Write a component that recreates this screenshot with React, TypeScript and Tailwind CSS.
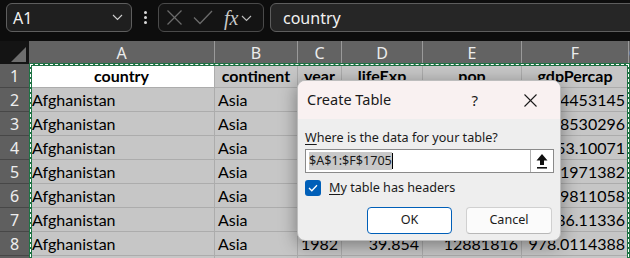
import React from "react";

const cellFont = { fontFamily: "Lato, 'Open Sans', sans-serif" };
const uiFont = { fontFamily: "'Noto Sans', 'Open Sans', sans-serif" };

type Cell = { t: string; align?: "l" | "c" | "r"; bold?: boolean; white?: boolean };

const rows: Cell[][] = [
  [
    { t: "country", align: "c", bold: true, white: true },
    { t: "continent", align: "c", bold: true },
    { t: "year", align: "c", bold: true },
    { t: "lifeExp", align: "c", bold: true },
    { t: "pop", align: "c", bold: true },
    { t: "gdpPercap", align: "c", bold: true },
  ],
  ...[
    ["1952", "28.801", "8425333", "779.4453145"],
    ["1957", "30.332", "9240934", "820.8530296"],
    ["1962", "31.997", "10267083", "853.10071"],
    ["1967", "34.02", "11537966", "836.1971382"],
    ["1972", "36.088", "13079460", "739.9811058"],
    ["1977", "38.438", "14880372", "786.11336"],
    ["1982", "39.854", "12881816", "978.0114388"],
    ["1987", "40.822", "13867957", "852.3959448"],
  ].map((r) => [
    { t: "Afghanistan", align: "l" as const },
    { t: "Asia", align: "l" as const },
    ...r.map((v) => ({ t: v, align: "r" as const })),
  ]),
];

const colLetters = ["A", "B", "C", "D", "E", "F", "G"];

function Chevron({ color = "#cfcfcf" }: { color?: string }) {
  return (
    <svg width="11" height="7" viewBox="0 0 11 7">
      <polyline points="1,1 5.5,5.5 10,1" fill="none" stroke={color} strokeWidth="1.1" />
    </svg>
  );
}

export default function App() {
  return (
    <div className="relative w-[630px] h-[258px] overflow-hidden bg-[#0d0d0d]">
      {/* top bar */}
      <div className="flex h-[41px] items-start pt-[3px] pl-[6px]">
        <div
          className="flex h-[29px] w-[126px] shrink-0 items-center justify-between rounded-[6px] border border-[#5e5e5e] bg-[#1f1f1f] pl-[6px] pr-[8px] text-[16px] text-[#f2f2f2]"
          style={uiFont}
        >
          <span>A1</span>
          <Chevron />
        </div>
        <div className="flex h-[29px] w-[26px] shrink-0 flex-col items-center justify-center gap-[2px]">
          <div className="h-[3px] w-[3px] rounded-full bg-[#d8d8d8]" />
          <div className="h-[3px] w-[3px] rounded-full bg-[#d8d8d8]" />
          <div className="h-[3px] w-[3px] rounded-full bg-[#d8d8d8]" />
        </div>
        <div className="flex h-[29px] w-[106px] shrink-0 items-center rounded-[6px] border border-[#4a4a4a] bg-[#141414] pl-[7px]">
          <svg width="17" height="17" viewBox="0 0 17 17">
            <line x1="1.5" y1="1.5" x2="15.5" y2="15.5" stroke="#6b6b6b" strokeWidth="1.3" />
            <line x1="15.5" y1="1.5" x2="1.5" y2="15.5" stroke="#6b6b6b" strokeWidth="1.3" />
          </svg>
          <svg width="20" height="17" viewBox="0 0 20 17" className="ml-[10px]">
            <polyline points="1,8.5 7,14.5 19,2" fill="none" stroke="#6b6b6b" strokeWidth="1.3" />
          </svg>
          <span
            className="ml-[11px] text-[20px] italic leading-none text-[#c8c8c8]"
            style={{ fontFamily: "'Liberation Serif', 'DejaVu Serif', serif" }}
          >
            fx
          </span>
          <span className="ml-[3px] mt-[2px]">
            <Chevron color="#bdbdbd" />
          </span>
        </div>
        <div
          className="ml-[6px] flex h-[29px] w-[380px] shrink-0 items-center rounded-[6px] border border-[#5e5e5e] bg-[#262626] pl-[12px] text-[16px] text-[#f2f2f2]"
          style={uiFont}
        >
          country
        </div>
      </div>

      {/* grid */}
      <div className="grid grid-cols-[29px_186px_83px_44px_81px_99px_107px_1fr]">
        {/* header row */}
        <div className="relative h-[23px] bg-[#141414]">
          <svg width="29" height="23" viewBox="0 0 29 23" className="absolute left-0 top-0">
            <polygon points="26,6 26,21 11,21" fill="#6e6e6e" />
          </svg>
        </div>
        {colLetters.map((c) => (
          <div
            key={c}
            className="flex h-[23px] items-center justify-center border-r border-[#9a9a9a] bg-[#636363] text-[16px] text-[#ececec]"
            style={uiFont}
          >
            {c}
          </div>
        ))}

        {rows.map((r, ri) => (
          <React.Fragment key={ri}>
            <div
              className="flex h-[24px] items-center justify-center border-b border-[#474747] bg-[#5f5f5f] text-[16px] text-[#eeeeee]"
              style={uiFont}
            >
              {ri + 1}
            </div>
            {r.map((cell, ci) => (
              <div
                key={ci}
                className={
                  "flex h-[24px] items-center overflow-hidden whitespace-nowrap border-b border-r border-[#acacac] px-[3px] text-[16px] text-black " +
                  (cell.white ? "bg-white " : "bg-[#c6c6c6] ") +
                  (cell.bold ? "font-bold " : "") +
                  (cell.align === "c"
                    ? "justify-center"
                    : cell.align === "r"
                    ? "justify-end"
                    : "justify-start")
                }
                style={cellFont}
              >
                {cell.t}
              </div>
            ))}
            <div className="h-[24px] border-b border-[#acacac] bg-[#d8d8d8]" />
          </React.Fragment>
        ))}
      </div>

      {/* marching ants around selected range */}
      <div className="absolute left-[29px] top-[63px] h-[300px] w-[601px] border-[3px] border-[#1f7244]">
        <div className="absolute left-[-2px] top-[-2px] right-[-2px] bottom-[-2px] border border-dashed border-white" />
      </div>

      {/* dialog */}
      <div
        className="absolute left-[297px] top-[80px] h-[161px] w-[264px] overflow-hidden rounded-[8px] border border-[#bdbdbd] bg-[#eeeeee] shadow-[0_4px_18px_rgba(0,0,0,0.4)]"
        style={uiFont}
      >
        <div className="flex h-[38px] items-center bg-[#f9f1f1] pl-[9px] text-[14.5px] text-[#1a1a1a]">
          <span className="flex-1">Create Table</span>
          <span className="mr-[46px] text-[15px]">?</span>
          <svg width="13" height="13" viewBox="0 0 13 13" className="mr-[23px]">
            <line x1="0.5" y1="0.5" x2="12.5" y2="12.5" stroke="#1a1a1a" strokeWidth="1.1" />
            <line x1="12.5" y1="0.5" x2="0.5" y2="12.5" stroke="#1a1a1a" strokeWidth="1.1" />
          </svg>
        </div>
        <div className="px-[7px] pt-[9px] text-[12.6px] text-[#1a1a1a]">
          <div className="leading-[20px]">
            <span className="underline underline-offset-2">W</span>here is the data for your table?
          </div>
          <div className="mt-[1px] flex h-[24px] w-[249px] items-center border border-[#8a8a8a] bg-white">
            <div className="flex flex-1 items-center pl-[3px]">
              <span className="bg-[#c8c8c8] leading-[18px]">$A$1:$F$1705</span>
              <span className="h-[16px] w-px bg-black" />
            </div>
            <div className="flex h-full w-[23px] items-center justify-center border-l border-[#b0b0b0] bg-white">
              <svg width="12" height="17" viewBox="0 0 12 17">
                <polygon points="6,1 11.5,7.5 8,7.5 8,12 4,12 4,7.5 0.5,7.5" fill="#111" />
                <rect x="1" y="14" width="10" height="1.6" fill="#111" />
              </svg>
            </div>
          </div>
          <div className="mt-[6px] flex items-center">
            <div className="flex h-[16px] w-[16px] items-center justify-center rounded-[3px] bg-[#005fb8]">
              <svg width="10" height="8" viewBox="0 0 10 8">
                <polyline points="1,4 3.8,6.8 9,1.2" fill="none" stroke="white" strokeWidth="1.3" />
              </svg>
            </div>
            <span className="ml-[8px]">
              <span className="underline underline-offset-2">M</span>y table has headers
            </span>
          </div>
          <div className="mt-[9px] flex justify-end gap-[14px] pr-[1px]">
            <div className="flex h-[27px] w-[85px] items-center justify-center rounded-[4px] border border-[#005fb8] bg-white">
              OK
            </div>
            <div className="flex h-[27px] w-[86px] items-center justify-center rounded-[4px] border border-[#d0d0d0] border-b-[#b8b8b8] bg-[#fbfbfb]">
              Cancel
            </div>
          </div>
        </div>
      </div>
    </div>
  );
}
